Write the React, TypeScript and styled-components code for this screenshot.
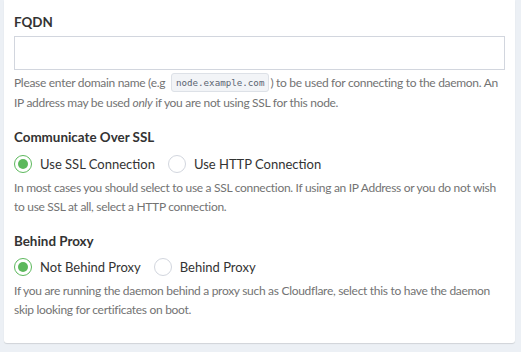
import React from "react";
import styled, { createGlobalStyle } from "styled-components";

const Global = createGlobalStyle`
  html, body { margin: 0; padding: 0; background: #ecf0f5; }
  body { font-family: Lato, "Noto Sans", sans-serif; color: #333; }
  * { box-sizing: border-box; }
`;

const Page = styled.div`
  width: 521px;
  height: 352px;
  padding: 0 6px 0 4px;
  background: #ecf0f5;
`;

const Box = styled.div`
  background: #fff;
  border-radius: 0 0 3px 3px;
  box-shadow: 0 1px 1px rgba(0, 0, 0, 0.12);
  padding: 12px 10px 22px 10px;
  height: 343px;
`;

const Group = styled.div`
  margin-bottom: 15px;
  &:last-child { margin-bottom: 0; }
`;

const Label = styled.label<{ mb?: number }>`
  display: block;
  font-weight: 700;
  font-size: 13.4px;
  line-height: 20px;
  color: #333;
  margin-bottom: ${(p) => p.mb ?? 4}px;
`;

const Input = styled.input`
  display: block;
  width: 100%;
  height: 34px;
  border: 1px solid #d2d6de;
  border-radius: 0;
  padding: 6px 12px;
  outline: none;
  background: #fff;
`;

const Help = styled.p<{ mt?: number }>`
  margin: ${(p) => p.mt ?? 4}px 0 0 0;
  font-size: 12px;
  letter-spacing: -0.3px;
  line-height: 19px;
  color: #737373;
`;

const Code = styled.code`
  display: inline-block;
  font-family: "DejaVu Sans Mono", monospace;
  font-size: 9.2px;
  letter-spacing: 0;
  line-height: 17px;
  padding: 0 4px 0 4px;
  margin: 0 1px 0 3px;
  background: #f2f4f7;
  border: 1px solid #dde1e7;
  border-radius: 3px;
  color: #5b6572;
  vertical-align: middle;
  position: relative;
  top: -1px;
`;

const RadioRow = styled.div`
  display: flex;
  align-items: center;
  height: 20px;
  gap: 13px;
`;

const RadioItem = styled.label`
  display: flex;
  align-items: center;
  gap: 8px;
  font-size: 13px;
  line-height: 20px;
  color: #333;
`;

const Circle = styled.span<{ checked?: boolean }>`
  width: 18px;
  height: 18px;
  border-radius: 50%;
  border: 1px solid ${(p) => (p.checked ? "#5cb85c" : "#d2d6de")};
  display: flex;
  align-items: center;
  justify-content: center;
  flex-shrink: 0;
  &::after {
    content: "";
    width: 10px;
    height: 10px;
    border-radius: 50%;
    background: #5cb85c;
    display: ${(p) => (p.checked ? "block" : "none")};
  }
`;

const Radio = ({ checked, children }: { checked?: boolean; children: React.ReactNode }) => (
  <RadioItem>
    <Circle checked={checked} />
    {children}
  </RadioItem>
);

export default function App() {
  return (
    <>
      <Global />
      <Page>
        <Box>
          <Group>
            <Label>FQDN</Label>
            <Input type="text" />
            <Help mt={3}>
              Please enter domain name (e.g <Code>node.example.com</Code>) to be used for connecting to the daemon. An
              IP address may be used <em>only</em> if you are not using SSL for this node.
            </Help>
          </Group>
          <Group>
            <Label mb={7}>Communicate Over SSL</Label>
            <RadioRow>
              <Radio checked>Use SSL Connection</Radio>
              <Radio>Use HTTP Connection</Radio>
            </RadioRow>
            <Help>
              In most cases you should select to use a SSL connection. If using an IP Address or you do not wish to use
              SSL at all, select a HTTP connection.
            </Help>
          </Group>
          <Group>
            <Label mb={6}>Behind Proxy</Label>
            <RadioRow>
              <Radio checked>Not Behind Proxy</Radio>
              <Radio>Behind Proxy</Radio>
            </RadioRow>
            <Help>
              If you are running the daemon behind a proxy such as Cloudflare, select this to have the daemon skip
              looking for certificates on boot.
            </Help>
          </Group>
        </Box>
      </Page>
    </>
  );
}
